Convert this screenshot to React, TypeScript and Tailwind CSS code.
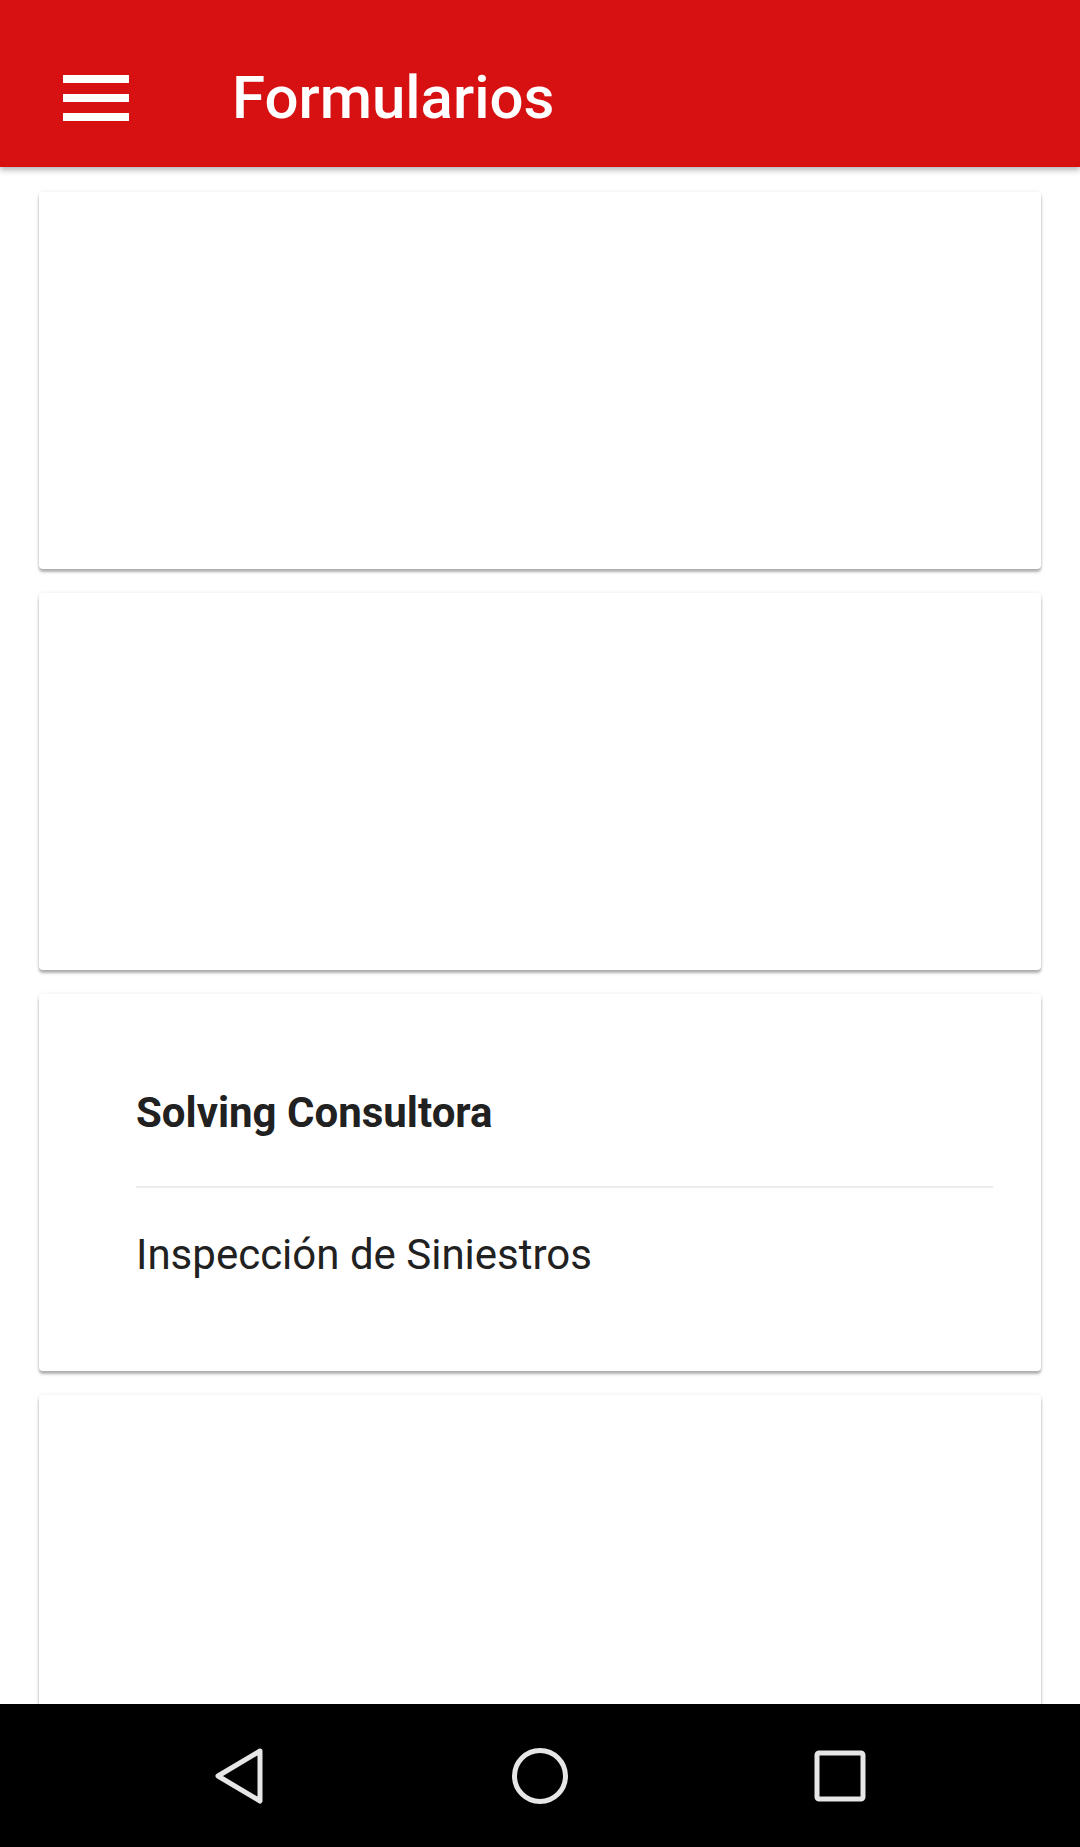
import React from "react";

const font = { fontFamily: "Roboto, 'Liberation Sans', sans-serif" };

function Card({ children }: { children?: React.ReactNode }) {
  return (
    <div className="card w-full h-[377px] shrink-0 bg-white rounded-[4px] shadow-[0_3px_3px_rgba(0,0,0,0.3),0_0_4px_rgba(0,0,0,0.08)]">
      {children}
    </div>
  );
}

function App() {
  return (
    <main className="flex flex-col w-[1080px] h-[1847px] bg-white overflow-hidden" style={font}>
      <header className="relative z-10 flex items-center h-[167px] pt-[28px] shrink-0 bg-[#d71111] shadow-[0_3px_6px_rgba(0,0,0,0.3)]">
        <button className="ml-[63px] flex flex-col gap-[11px] w-[66px]">
          <span className="block h-[8px] bg-white" />
          <span className="block h-[8px] bg-white" />
          <span className="block h-[8px] bg-white" />
        </button>
        <h1 className="ml-[103px] text-white text-[60px] font-medium leading-none">Formularios</h1>
      </header>

      <div className="lista flex-1 overflow-hidden flex flex-col gap-[24px] pt-[25px] px-[39px]">
        <Card />
        <Card />
        <Card>
          <div className="pl-[97px] pr-[48px] pt-[89px]">
            <h2 className="text-[#212121] text-[42px] font-bold leading-[60px]">Solving Consultora</h2>
            <div className="mt-[43px] h-[2px] bg-[#ececec]" />
            <p className="mt-[37px] text-[#212121] text-[42px] leading-[60px]">Inspección de Siniestros</p>
          </div>
        </Card>
        <Card />
      </div>

      <nav className="flex items-center h-[143px] shrink-0 bg-black">
        <div className="flex w-full items-center pt-[1px]">
          <svg className="ml-[212px]" width="54" height="58" viewBox="0 0 54 58" fill="none">
            <path d="M48 4 L6 29 L48 54 Z" stroke="#e6e6e6" strokeWidth="5" strokeLinejoin="round" />
          </svg>
          <svg className="ml-[245px]" width="58" height="58" viewBox="0 0 58 58" fill="none">
            <circle cx="29" cy="29" r="25.5" stroke="#e6e6e6" strokeWidth="5" />
          </svg>
          <svg className="ml-[245px]" width="52" height="52" viewBox="0 0 52 52" fill="none">
            <rect x="3" y="3" width="46" height="46" rx="2" stroke="#e6e6e6" strokeWidth="5" />
          </svg>
        </div>
      </nav>
    </main>
  );
}

export default App;
